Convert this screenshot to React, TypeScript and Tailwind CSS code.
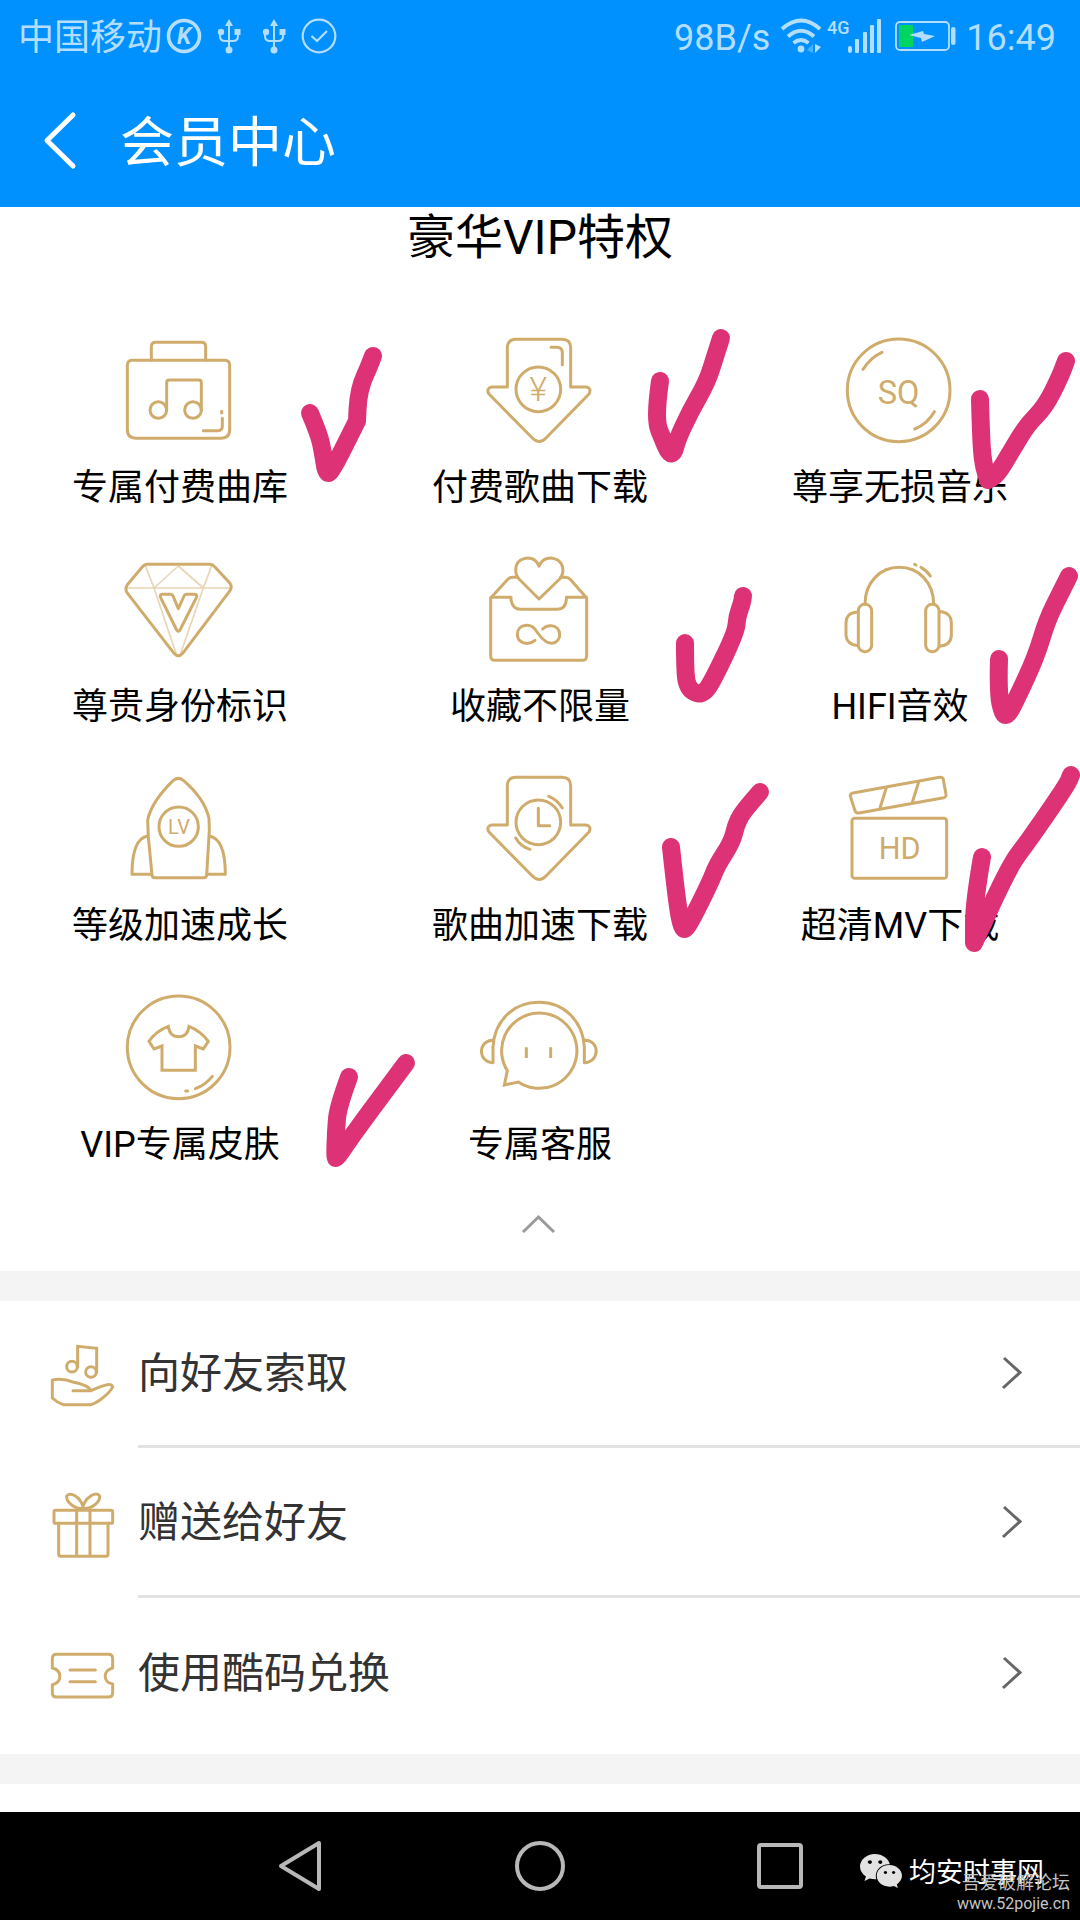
import React from 'react';
import { FaWeixin } from 'react-icons/fa';

type IconProps = { viewBox: string; children: React.ReactNode; className: string };

function LineIcon({ viewBox, children, className }: IconProps) {
  return (
    <svg
      viewBox={viewBox}
      className={className}
      fill="none"
      stroke="#cfac6c"
      strokeWidth={9}
      strokeLinecap="round"
      strokeLinejoin="round"
      aria-hidden="true"
    >
      {children}
    </svg>
  );
}

function IconText({ x, y, size, weight = 400, children }: { x: number; y: number; size: number; weight?: number; children: string }) {
  return (
    <text x={x} y={y} fontSize={size} fontWeight={weight} textAnchor="middle" fill="#cfac6c" stroke="none" fontFamily="Roboto, sans-serif">
      {children}
    </text>
  );
}

const downArrow =
  'M322 201V84Q322 58 348 58H486Q512 58 512 84V201H558Q576 204 567 222L438 354Q418 375 397 354L267 222Q257 205 275 201Z';

const privileges = [
  {
    label: '专属付费曲库',
    viewBox: '240 30 360 360',
    art: (
      <>
        <path d="M334 121V80Q334 67 347 67H484Q497 67 497 80V121" />
        <path d="M276 121H554Q569 121 569 136V328Q569 355 542 355H289Q262 355 262 328V136Q262 121 276 121Z" />
        <circle cx="355" cy="270" r="25" />
        <circle cx="459" cy="270" r="25" />
        <path d="M380 270V188Q380 180 388 180H476Q484 180 484 188V270" />
        <path d="M490 332H534Q547 332 547 319V295M545 274V279" />
      </>
    ),
  },
  {
    label: '付费歌曲下载',
    viewBox: '240 30 360 360',
    art: (
      <>
        <path d={downArrow} />
        <circle cx="415" cy="208" r="67" />
        <path d="M453 82H470Q487 82 487 99V134" />
        <IconText x={415} y={244} size={102} weight={300}>¥</IconText>
      </>
    ),
  },
  {
    label: '尊享无损音乐',
    viewBox: '240 30 360 360',
    art: (
      <>
        <circle cx="416" cy="211" r="154" />
        <path d="M309 148Q332 112 366 97M464 327Q502 312 523 275" />
        <IconText x={416} y={251} size={98}>SQ</IconText>
      </>
    ),
  },
  {
    label: '尊贵身份标识',
    viewBox: '240 687 360 360',
    art: (
      <>
        <g strokeWidth={5} opacity="0.5">
          <path d="M260 804H572M317 740L342 804L415 738L490 804L514 740M342 804L408 1000M490 804L422 1000" />
        </g>
        <path d="M322 733H510Q518 733 524 740L570 790Q577 800 570 812L428 1000Q415 1015 402 1000L261 818Q254 807 262 794L306 742Q313 733 322 733Z" />
        <path d="M367 823H392Q397 823 399 828L415 866L432 828Q434 823 439 823H464Q473 824 469 833L420 930Q415 938 410 930L362 833Q358 824 367 823Z" />
      </>
    ),
  },
  {
    label: '收藏不限量',
    viewBox: '240 687 360 360',
    art: (
      <>
        <path d="M417 837L357 777C342 759 345 732 361 721C382 707 409 714 417 739C426 714 453 707 474 721C491 733 494 758 479 777Z" />
        <path d="M353 772H338Q328 772 322 779L272 834V1007Q272 1021 286 1021H546Q560 1021 560 1007V834L512 779Q506 772 496 772H482" />
        <path d="M273 832H333V840Q338 868 362 868H472Q496 868 499 840V832H559" />
        <path d="M405 961C385 978 352 970 352 943C352 912 393 905 411 936C432 966 445 971 456 970C488 966 486 919 454 917Q438 916 428 927" />
      </>
    ),
  },
  {
    label: 'HIFI音效',
    viewBox: '240 687 360 360',
    art: (
      <>
        <path d="M315 853C315 785 362 742 418 742C474 742 521 785 521 853" />
        <rect x="295" y="853" width="40" height="142" rx="19" />
        <rect x="497" y="853" width="40" height="142" rx="19" />
        <path d="M293 877H286Q258 881 258 908V947Q260 973 293 977M539 875H546Q574 881 574 908V947Q572 976 539 979" />
        <path d="M464 733L468 735M483 742Q501 752 511 768" />
      </>
    ),
  },
  {
    label: '等级加速成长',
    viewBox: '240 84 360 360',
    art: (
      <>
        <path d="M400 121Q415 109 430 121C470 155 498 195 507 235L508 270L500 406Q499 413 492 413H344Q337 413 336 406L325 290L323 240C332 195 365 155 400 121Z" />
        <path d="M323 288C290 294 276 335 276 403H334M508 288C541 294 556 335 556 403H501" />
        <circle cx="416" cy="260" r="59" />
        <IconText x={417} y={281} size={60}>LV</IconText>
      </>
    ),
  },
  {
    label: '歌曲加速下载',
    viewBox: '240 30 360 360',
    art: (
      <>
        <path d={downArrow} />
        <circle cx="415" cy="193" r="67" />
        <path d="M415 151V203H449M446 115Q472 125 487 150M347 240Q362 266 390 274" />
      </>
    ),
  },
  {
    label: '超清MV下载',
    viewBox: '240 84 360 360',
    art: (
      <>
        <rect x="276" y="235" width="284" height="180" rx="8" />
        <path d="M279 159L539 112Q548 110 550 119L558 163Q560 171 551 173L297 219Q288 220 285 212L271 169Q269 161 279 159Z" />
        <path d="M379 143L360 204M476 126L457 187" />
        <IconText x={419} y={356} size={92}>HD</IconText>
      </>
    ),
  },
  {
    label: 'VIP专属皮肤',
    viewBox: '240 741 360 360',
    art: (
      <>
        <circle cx="416" cy="922" r="154" />
        <path
          strokeLinejoin="miter"
          d="M385 859Q348 873 327 904L342 927L366 918V991H466V918L490 927L505 904Q482 873 447 859Q443 890 416 890Q389 890 385 859Z"
        />
        <path d="M437 1053H443M466 1046Q496 1035 517 1009" />
      </>
    ),
  },
  {
    label: '专属客服',
    viewBox: '180 741 360 360',
    art: (
      <>
        <path strokeLinejoin="miter" d="M262 992A113 113 0 1 1 295 1026L253 1035Z" />
        <path d="M219 968V920C224 842 280 787 356 787C432 787 488 842 493 920V968C540 966 540 901 495 901M219 968C173 966 173 903 217 901" />
        <path strokeLinecap="butt" d="M319 922V954M392 922V954" />
      </>
    ),
  },
];

type Point = [number, number];

/* Hand-drawn marks; a repeated point keeps that corner sharp. */
const ticks: Point[][] = [
  [[310, 413], [319, 434], [323, 453], [326, 473], [331, 473], [357, 421], [357, 421], [358, 399], [362, 382], [368, 369], [373, 356]],
  [[660, 381], [657, 403], [657, 425], [662, 437], [669, 454], [674, 453], [677, 440], [690, 412], [707, 382], [715, 357], [721, 338]],
  [[980, 399], [981, 437], [983, 463], [988, 480], [988, 480], [997, 475], [1012, 450], [1027, 425], [1045, 407], [1060, 377], [1066, 361]],
  [[685, 643], [685, 673], [688, 688], [697, 694], [704, 693], [712, 682], [736, 632], [737, 617], [742, 603], [743, 596]],
  [[999, 659], [998, 693], [1003, 715], [1008, 715], [1015, 702], [1036, 657], [1047, 620], [1062, 590], [1069, 576]],
  [[671, 847], [677, 903], [682, 929], [687, 929], [710, 883], [717, 865], [732, 842], [736, 825], [742, 813], [760, 792]],
  [[982, 857], [974, 903], [974, 943], [974, 943], [1010, 865], [1027, 843], [1067, 785], [1071, 775]],
  [[349, 1077], [338, 1107], [336, 1130], [335, 1158], [337, 1158], [354, 1133], [406, 1063]],
];

function smoothPath(points: Point[]) {
  const [first, ...rest] = points;
  let d = `M${first[0]} ${first[1]}`;
  rest.forEach(([x, y], i) => {
    const next = rest[i + 1];
    d += next ? `Q${x} ${y} ${(x + next[0]) / 2} ${(y + next[1]) / 2}` : `L${x} ${y}`;
  });
  return d;
}

const actions = [
  {
    label: '向好友索取',
    viewBox: '138 411 216 216',
    art: (
      <>
        <path strokeLinejoin="miter" d="M233 494V433L290 439V510" />
        <circle cx="216" cy="494" r="16" />
        <circle cx="273" cy="510" r="16" />
        <path d="M219 566H273Q265 550 222 541C200 532 180 529 157 534V588Q170 601 190 608H272Q285 605 300 594Q331 571 338 555Q337 546 322 548Q302 553 273 566" />
      </>
    ),
  },
  {
    label: '赠送给好友',
    viewBox: '138 76 216 216',
    art: (
      <>
        <rect x="162" y="146" width="176" height="39" rx="5" />
        <path d="M176 187V278Q176 284 182 284H318Q324 284 324 278V187M230 147V283M270 147V283" />
        <path d="M249 140C220 143 198 118 200 103C209 88 241 105 249 135C257 105 289 88 299 103C301 118 279 143 249 140Z" />
      </>
    ),
  },
  {
    label: '使用酷码兑换',
    viewBox: '138 531 216 216',
    art: (
      <>
        <path d="M170 583H325Q338 583 338 596V624C308 631 308 667 338 672V699Q338 711 325 711H170Q157 711 157 699V674C187 667 187 631 157 624V596Q157 583 170 583Z" />
        <path d="M210 630H286M210 665H286" />
      </>
    ),
  },
];

function UsbIcon() {
  return (
    <svg viewBox="0 0 24 36" className="h-9 w-6" fill="none" stroke="currentColor" strokeWidth="2" aria-hidden="true">
      <path d="M12 5V32M3 14V18Q3 23 8 23H16Q21 23 21 18V14" />
      <path d="M12 1L16 8H8Z" fill="currentColor" stroke="none" />
      <circle cx="12" cy="32" r="3.5" fill="currentColor" stroke="none" />
      <circle cx="4" cy="14" r="3.2" fill="currentColor" stroke="none" />
      <rect x="17.5" y="11" width="6" height="6" fill="currentColor" stroke="none" />
    </svg>
  );
}

function StatusBar() {
  return (
    <div className="flex h-[72px] items-center justify-between pr-6 pl-[18px] text-[36px] leading-[42px] text-[#b3deff]">
      <div className="flex items-center">
        <span className="pt-1">中国移动</span>
        <svg viewBox="0 0 36 36" className="ml-1 size-9" aria-hidden="true">
          <circle cx="18" cy="18" r="15.5" fill="none" stroke="currentColor" strokeWidth="3.6" />
          <text x="18" y="26" fontSize="23" fontWeight="700" fontStyle="italic" textAnchor="middle" fill="currentColor" fontFamily="Roboto, sans-serif">
            K
          </text>
        </svg>
        <span className="ml-[15px] flex gap-[21px]">
          <UsbIcon />
          <UsbIcon />
        </span>
        <svg viewBox="0 0 36 36" className="ml-[15px] size-9" fill="none" stroke="currentColor" strokeWidth="2.2" aria-hidden="true">
          <circle cx="18" cy="18" r="16.3" />
          <path d="M10.500 18L16 23L26 13" />
        </svg>
      </div>
      <div className="flex items-center">
        <span className="pt-1">98B/s</span>
        <svg viewBox="0 0 42 36" className="ml-2.5 h-9 w-[42px]" fill="none" stroke="currentColor" strokeWidth="3.8" aria-hidden="true">
          <path d="M2 11Q21 -6 40 11M8 18.500Q21 7 34 18.500M13.500 25Q21 19 28.500 25" />
          <circle cx="21" cy="31" r="3.4" fill="currentColor" stroke="none" />
          <path d="M35 26V35L41 29Z" fill="currentColor" stroke="none" />
          <path d="M33 26V35L27 32Z" fill="currentColor" stroke="none" opacity="0.4" />
        </svg>
        <svg viewBox="0 0 56 36" className="ml-1 h-9 w-14" fill="currentColor" aria-hidden="true">
          <text x="1" y="16" fontSize="18" fontWeight="500" fontFamily="Roboto, sans-serif">
            4G
          </text>
          <rect x="22" y="28" width="4" height="7" rx="2" />
          <rect x="29" y="21" width="4" height="14" rx="1" />
          <rect x="37" y="14" width="4" height="21" rx="1" />
          <rect x="44" y="7" width="4" height="28" rx="1" />
          <rect x="51" y="1" width="4" height="34" rx="1" />
        </svg>
        <svg viewBox="0 0 64 36" className="ml-3 h-9 w-16" aria-hidden="true">
          <rect x="2" y="4" width="53" height="28" rx="4" fill="none" stroke="currentColor" strokeWidth="1.8" />
          <rect x="5" y="7" width="14" height="22" fill="#00d55f" />
          <path d="M15 17L29 13L30 16L41 18L28 24L27 20Z" fill="currentColor" />
          <rect x="57" y="9" width="4.500" height="18" rx="2" fill="currentColor" />
        </svg>
        <span className="ml-2 pt-1">16:49</span>
      </div>
    </div>
  );
}

export default function App() {
  return (
    <div
      className="flex min-h-screen flex-col bg-white text-black"
      style={{ fontFamily: 'Roboto, "Noto Sans CJK SC", sans-serif' }}
    >
      <header className="bg-[#0091ff]">
        <StatusBar />
        <div className="flex h-[135px] items-center pl-10 text-white">
          <button type="button" aria-label="返回" className="flex h-16 w-20 items-center">
            <svg viewBox="0 0 40 60" className="h-[60px] w-10" fill="none" stroke="currentColor" strokeWidth="5" strokeLinecap="round" strokeLinejoin="round" aria-hidden="true">
              <path d="M33 5L7 30.500L33 56" />
            </svg>
          </button>
          <h1 className="pt-2 text-[54px] leading-[72px] font-normal">会员中心</h1>
        </div>
      </header>

      <main className="flex-1">
        <section className="relative h-[1064px]">
          <h2 className="h-[123px] text-center text-[48px] leading-[62px] font-normal">豪华VIP特权</h2>
          <ul className="grid grid-cols-3">
            {privileges.map((item) => (
              <li key={item.label} className="flex h-[219px] flex-col items-center">
                <LineIcon viewBox={item.viewBox} className="size-[120px]">
                  {item.art}
                </LineIcon>
                <span className="mt-2.5 text-[36px] leading-[56px]">{item.label}</span>
              </li>
            ))}
          </ul>
          <button type="button" aria-label="收起" className="mx-auto flex h-9 w-20 items-center justify-center">
            <svg viewBox="0 0 40 24" className="h-6 w-10" fill="none" stroke="#9a9a9a" strokeWidth="3" aria-hidden="true">
              <path d="M3 20L18.500 5L34 20" />
            </svg>
          </button>
          <svg
            viewBox="0 207 1080 1064"
            preserveAspectRatio="none"
            className="pointer-events-none absolute inset-0 h-full w-full"
            fill="none"
            stroke="#dd3275"
            strokeWidth="18"
            strokeLinecap="round"
            strokeLinejoin="round"
            aria-hidden="true"
          >
            {ticks.map((points, i) => (
              <path key={i} d={smoothPath(points)} />
            ))}
          </svg>
        </section>

        <ul className="border-y-[30px] border-[#f4f4f4] pb-[6px]">
          {actions.map((item) => (
            <li key={item.label} className="group h-[150px] first:h-[147px]">
              <button type="button" className="flex h-full w-full items-center pl-[46px] text-left">
                <LineIcon viewBox={item.viewBox} className="size-[72px]">
                  {item.art}
                </LineIcon>
                <span className="ml-5 flex h-full flex-1 items-center justify-between border-b-[3px] border-[#e3e3e3] pr-14 group-last:border-b-0">
                  <span className="pt-0.5 text-[42px] leading-[60px] text-[#333333]">{item.label}</span>
                  <svg viewBox="0 0 24 36" className="h-9 w-6" fill="none" stroke="#666666" strokeWidth="3" aria-hidden="true">
                    <path d="M4 3L20 17.500L3 33" />
                  </svg>
                </span>
              </button>
            </li>
          ))}
        </ul>
      </main>

      <footer className="relative grid h-[108px] grid-cols-3 bg-black px-[180px] text-[#b8b8b8]">
        <button type="button" aria-label="后退" className="flex items-center justify-center">
          <svg viewBox="0 0 56 56" className="size-14" fill="none" stroke="currentColor" strokeWidth="4" strokeLinejoin="round" aria-hidden="true">
            <path d="M47 5V51L9 28Z" />
          </svg>
        </button>
        <button type="button" aria-label="主页" className="flex items-center justify-center">
          <svg viewBox="0 0 56 56" className="size-14" fill="none" stroke="currentColor" strokeWidth="4" aria-hidden="true">
            <circle cx="28" cy="28" r="23" />
          </svg>
        </button>
        <button type="button" aria-label="最近任务" className="flex items-center justify-center">
          <svg viewBox="0 0 56 56" className="size-14" fill="none" stroke="currentColor" strokeWidth="4" aria-hidden="true">
            <rect x="7" y="7" width="42" height="42" rx="2" />
          </svg>
        </button>
        <div className="absolute top-9 right-9 flex items-center gap-1.5 text-white">
          <FaWeixin className="size-11 text-[#e2e2e2]" aria-hidden="true" />
          <span className="pt-1 text-[27px] leading-[42px]">均安时事网</span>
        </div>
        <div className="absolute right-2.5 bottom-1.5 text-right text-[#c4c4c4]">
          <p className="text-[18px] leading-[22px]">吾爱破解论坛</p>
          <p className="text-[16px] leading-[20px]">www.52pojie.cn</p>
        </div>
      </footer>
    </div>
  );
}
